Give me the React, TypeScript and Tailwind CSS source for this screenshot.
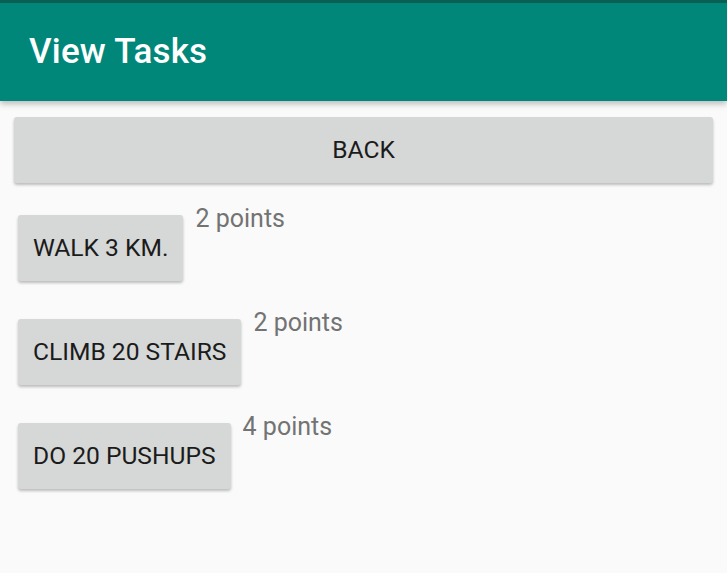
const tasks = [
  { name: "WALK 3 KM.", points: 2 },
  { name: "CLIMB 20 STAIRS", points: 2 },
  { name: "DO 20 PUSHUPS", points: 4 },
];

export default function App() {
  return (
    <div className="min-h-[573px] bg-[#fafafa] font-['Roboto',sans-serif]">
      {/* Toolbar */}
      <div className="border-t-[3px] border-[#0a5f55] bg-[#00877a] h-[101px] flex items-center px-[29px] shadow-[0_3px_6px_rgba(0,0,0,0.25)]">
        <h1 className="text-white text-[35px] font-medium tracking-[0.2px]">View Tasks</h1>
      </div>

      <div className="px-[14px] pt-[16px]">
        <button className="w-full h-[66px] bg-[#d6d7d7] rounded-[3px] text-[24.6px] text-[#1b1b1b] shadow-[0_2px_3px_rgba(0,0,0,0.25)]">
          BACK
        </button>
      </div>

      <div className="flex flex-col gap-[38px] pt-[32px] pl-[18px]">
        {tasks.map((t) => (
          <div key={t.name} className="flex items-start">
            <button className="h-[66px] px-[15px] bg-[#d6d7d7] rounded-[3px] text-[24.6px] text-[#1b1b1b] shadow-[0_2px_3px_rgba(0,0,0,0.25)]">
              {t.name}
            </button>
            <span className="ml-[12px] -mt-[12px] text-[25px] text-[#737373] leading-[32px]">
              {t.points} points
            </span>
          </div>
        ))}
      </div>
    </div>
  );
}
